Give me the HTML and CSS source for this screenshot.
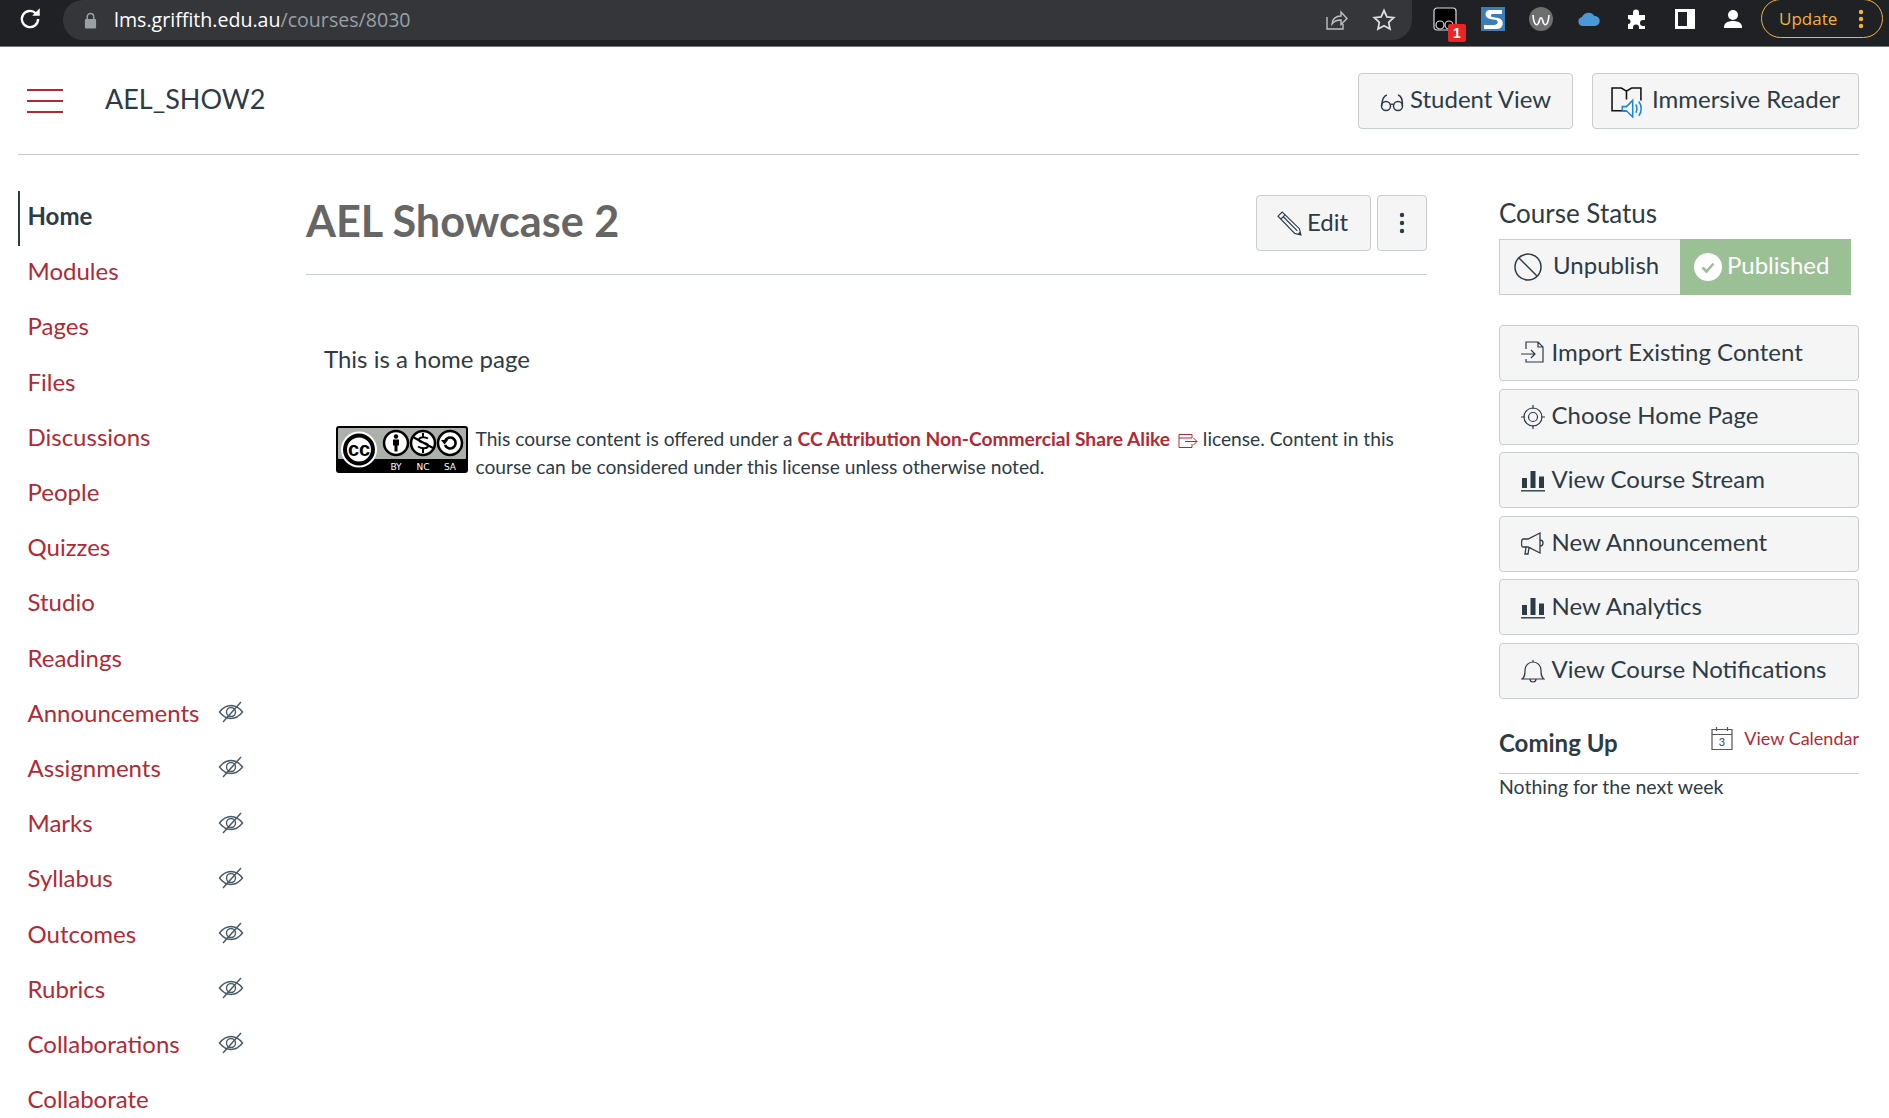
FILE: index.html
```html
<!DOCTYPE html>
<html lang="en">

<head>
  <meta charset="UTF-8">
  <title>AEL Showcase 2</title>
  <link rel="stylesheet" href="styles.css">
</head>

<body>
  <svg class="sprites" width="0" height="0">
    <symbol id="eye-off" viewBox="0 0 26 24">
      <path d="M1.5 12C5 7.5 9 5.5 13 5.5S21 7.500 24.500 12C21 16.500 17 18.500 13 18.500S5 16.500 1.500 12Z" fill="none" stroke="currentColor" stroke-width="1.400"/>
      <circle cx="13" cy="12" r="4.500" fill="none" stroke="currentColor" stroke-width="1.400"/>
      <path d="M5 22 23 2" stroke="currentColor" stroke-width="1.500"/>
    </symbol>
    <symbol id="bars" viewBox="0 0 24 24">
      <path d="M1 10h5v10H1zM9.500 3h5v17h-5zM18 8.500h5V20h-5z" fill="currentColor"/>
      <path d="M0 22.800h24" stroke="currentColor" stroke-width="1.400"/>
    </symbol>
  </svg>

  <div class="toolbar">
    <svg class="reload" viewBox="0 0 24 24"><path d="M19.500 12a7.500 7.500 0 1 1-2.200-5.300" fill="none" stroke="#fff" stroke-width="2.200"/><path d="M14 9h7V2z" fill="#fff"/></svg>
    <div class="omnibox">
      <svg class="lock" viewBox="0 0 14 18"><path d="M3.500 8V5a3.500 3.500 0 0 1 7 0v3" fill="none" stroke="#9aa0a6" stroke-width="1.600"/><rect x="1" y="7.500" width="12" height="10" rx="1" fill="#9aa0a6"/></svg>
      <span class="url"><span class="host">lms.griffith.edu.au</span>/courses/8030</span>
      <svg class="omni-icon share" viewBox="0 0 24 24"><path d="M3 9v12h16v-5M8 16c0-5 4-8 9-8V4l6 6.500-6 6V12c-4 0-7 1-9 4Z" fill="none" stroke="#bdc1c6" stroke-width="1.400"/></svg>
      <svg class="omni-icon" viewBox="0 0 24 24"><path d="M12 2.500l2.900 6.300 6.800.8-5 4.700 1.300 6.800-6-3.400-6 3.400 1.300-6.800-5-4.700 6.800-.8Z" fill="none" stroke="#dadce0" stroke-width="1.800"/></svg>
    </div>
    <div class="extensions">
      <div class="ext">
        <svg viewBox="0 0 24 24"><rect x="1" y="1" width="22" height="22" rx="3" fill="#000" stroke="#dadce0" stroke-width="1.200"/><circle cx="7" cy="18" r="4" fill="none" stroke="#dadce0" stroke-width="1.200"/><circle cx="16" cy="18" r="4" fill="none" stroke="#dadce0" stroke-width="1.200"/></svg>
        <span class="ext-badge">1</span>
      </div>
      <svg class="ext" viewBox="0 0 24 24"><rect width="24" height="24" fill="#3d7db5"/><path d="M21 3H9C3 3 3 11 9 12l6 1c3 1 2 5-2 5H3v4h13c7 0 8-10 1-11l-6-1c-2-1-1-3 1-3h9Z" fill="#fff"/></svg>
      <svg class="ext" viewBox="0 0 24 24"><circle cx="12" cy="12" r="12" fill="#6e6e6e"/><path d="M4 8c1 12 5 12 6.500 5 .5-3 2.500-3 3 0C15 20 19 20 20 8" fill="none" stroke="#fff" stroke-width="1.600"/></svg>
      <svg class="ext" viewBox="0 0 24 24"><path d="M6 19a4.500 4.500 0 0 1-1-8.900A7 7 0 0 1 17.500 9 5 5 0 0 1 18 19Z" fill="#4a98d6"/></svg>
      <svg class="ext" viewBox="0 0 24 24"><path d="M3 8h5V5.500a3 3 0 0 1 6 0V8h6v5h-2a3 3 0 0 0 0 6h2v3h-6v-1.500a3 3 0 0 0-6 0V22H3v-5a2.500 2.500 0 0 0 0-5Z" fill="#fff"/></svg>
      <svg class="ext" viewBox="0 0 24 24"><path d="M2 2h20v20H2zM5 5v14h9V5z" fill="#fff" fill-rule="evenodd"/></svg>
      <svg class="ext" viewBox="0 0 24 24"><circle cx="12" cy="8" r="5" fill="#fff"/><path d="M3 20c0-4 4-6 9-6s9 2 9 6v1H3Z" fill="#fff"/></svg>
    </div>
    <div class="update">Update
      <svg class="update-dots" viewBox="0 0 6 20"><circle cx="3" cy="3" r="2.200"/><circle cx="3" cy="10" r="2.200"/><circle cx="3" cy="17" r="2.200"/></svg>
    </div>
  </div>

  <header class="course-header">
    <div class="hamburger"><span></span><span></span><span></span></div>
    <div class="crumb">AEL_SHOW2</div>
    <div class="header-actions">
      <a class="btn student-view">
        <svg class="icon-sm" viewBox="0 0 24 24"><circle cx="6" cy="17" r="4.500" fill="none" stroke="currentColor" stroke-width="1.500"/><circle cx="18" cy="17" r="4.500" fill="none" stroke="currentColor" stroke-width="1.500"/><path d="M10 16c1-1 3-1 4 0M1.600 17C2 11 3 7 7 6M22.400 17C22.500 11 22 7 18 6" fill="none" stroke="currentColor" stroke-width="1.500"/></svg>
        Student View
      </a>
      <a class="btn reader">
        <svg class="icon-reader" viewBox="0 0 32 32"><path d="M15 24H1V2h9l5 3 5-3h9v12M15 5v8" fill="none" stroke="#111" stroke-width="1.500"/><path d="M11 20h4l6-6v16l-6-6h-4Z" fill="#fff" stroke="#1a86d8" stroke-width="1.500"/><path d="M24 18c1.500 2 1.500 6 0 8M27 15c3 4 3 10 0 14" fill="none" stroke="#1a86d8" stroke-width="1.500"/></svg>
        Immersive Reader
      </a>
    </div>
  </header>

  <div class="layout">
    <nav class="course-nav">
      <a class="nav-item active">Home</a>
      <a class="nav-item">Modules</a>
      <a class="nav-item">Pages</a>
      <a class="nav-item">Files</a>
      <a class="nav-item">Discussions</a>
      <a class="nav-item">People</a>
      <a class="nav-item">Quizzes</a>
      <a class="nav-item">Studio</a>
      <a class="nav-item">Readings</a>
      <a class="nav-item">Announcements<svg class="eye"><use href="#eye-off"/></svg></a>
      <a class="nav-item">Assignments<svg class="eye"><use href="#eye-off"/></svg></a>
      <a class="nav-item">Marks<svg class="eye"><use href="#eye-off"/></svg></a>
      <a class="nav-item">Syllabus<svg class="eye"><use href="#eye-off"/></svg></a>
      <a class="nav-item">Outcomes<svg class="eye"><use href="#eye-off"/></svg></a>
      <a class="nav-item">Rubrics<svg class="eye"><use href="#eye-off"/></svg></a>
      <a class="nav-item">Collaborations<svg class="eye"><use href="#eye-off"/></svg></a>
      <a class="nav-item">Collaborate</a>
    </nav>

    <main class="content">
      <div class="page-title">
        <h1>AEL Showcase 2</h1>
        <a class="btn edit">
          <svg class="icon-edit" viewBox="0 0 24 24"><path d="M1 5 5 1 21.500 17 23 23l-6-1.500ZM3.500 8 8 3.500M6 5.500l13.500 13.500" fill="none" stroke="currentColor" stroke-width="1.100"/><path d="M20 21.800 23 23l-1-3.200Z" fill="currentColor"/></svg>
          Edit
        </a>
        <a class="btn kebab">
          <svg viewBox="0 0 6 22" width="6" height="22"><circle cx="3" cy="3" r="2.200"/><circle cx="3" cy="11" r="2.200"/><circle cx="3" cy="19" r="2.200"/></svg>
        </a>
      </div>

      <p class="home-text">This is a home page</p>

      <div class="license">
        <svg class="cc-badge" viewBox="0 0 132 47">
          <rect width="132" height="47" rx="3" fill="#000"/>
          <rect x="2" y="2" width="128" height="31" rx="1" fill="#abb1aa"/>
          <circle cx="23" cy="23.500" r="18" fill="#fff"/>
          <circle cx="23" cy="23.500" r="14" fill="#fff" stroke="#000" stroke-width="4"/>
          <text x="23" y="29.500" class="cc-mark">cc</text>
          <circle cx="60" cy="17" r="12" fill="#fff" stroke="#000" stroke-width="2.500"/>
          <circle cx="60" cy="10.500" r="2.200"/>
          <path d="M57 13.500h6v6h-1.500v6h-3v-6H57Z"/>
          <circle cx="87" cy="17" r="12" fill="#fff" stroke="#000" stroke-width="2.500"/>
          <path d="M92 12.500c-3-2-9-2-9 1.500s9 2 9 5.500-6 3.500-10 1M87 7v4M87 23v4M77 11l20 11" fill="none" stroke="#000" stroke-width="2"/>
          <circle cx="114" cy="17" r="12" fill="#fff" stroke="#000" stroke-width="2.500"/>
          <path d="M109 15a5.500 5.500 0 1 1 0 4" fill="none" stroke="#000" stroke-width="2.600"/>
          <path d="M105 14h7l-3.500 4.500Z"/>
          <text x="60" y="43.500" class="cc-terms">BY</text>
          <text x="87" y="43.500" class="cc-terms">NC</text>
          <text x="114" y="43.500" class="cc-terms">SA</text>
        </svg>
        <p>This course content is offered under a <a class="license-link">CC Attribution Non-Commercial Share Alike</a>
          <svg class="external" viewBox="0 0 20 16"><path d="M14 5V1.500H1v13h13V11M1 5h13" fill="none" stroke="#b02a35" stroke-width="1"/><path d="M7 8.500h12M15.500 5l3.500 3.500-3.500 3.500" fill="none" stroke="#b02a35" stroke-width="1"/></svg>
          license. Content in this course can be considered under this license unless otherwise noted.</p>
      </div>
    </main>

    <aside class="sidebar">
      <h2 class="status-title">Course Status</h2>
      <div class="status-group">
        <a class="status-btn unpublish">
          <svg class="status-icon" viewBox="0 0 28 28"><circle cx="14" cy="14" r="13" fill="none" stroke="currentColor" stroke-width="1.500"/><path d="M5 5l18 18" stroke="currentColor" stroke-width="1.500"/></svg>
          Unpublish
        </a>
        <a class="status-btn published">
          <svg class="status-icon" viewBox="0 0 28 28"><circle cx="14" cy="14" r="14" fill="#fff"/><path d="M8.500 14.500l4 4 7-8" fill="none" stroke="#9bc096" stroke-width="2.600"/></svg>
          Published
        </a>
      </div>

      <div class="course-actions">
        <a class="btn action">
          <svg class="action-icon" viewBox="0 0 24 24"><path d="M5 8V1h12l5 5v15H5v-3M17 1v5h5M0 13h14M10 9l4 4-4 4" fill="none" stroke="currentColor" stroke-width="1.200"/></svg>
          <span>Import Existing Content</span>
        </a>
        <a class="btn action">
          <svg class="action-icon" viewBox="0 0 24 24"><circle cx="12" cy="12" r="9" fill="none" stroke="currentColor" stroke-width="1.200"/><circle cx="12" cy="12" r="4.500" fill="none" stroke="currentColor" stroke-width="1.200"/><path d="M12 0v4M12 20v4M0 12h4M20 12h4" stroke="currentColor" stroke-width="1.200"/></svg>
          <span>Choose Home Page</span>
        </a>
        <a class="btn action">
          <svg class="action-icon"><use href="#bars"/></svg>
          <span>View Course Stream</span>
        </a>
        <a class="btn action">
          <svg class="action-icon" viewBox="0 0 24 24"><path d="M19 1 7 7H2C0 7 0 15 2 15h5l12 6ZM19 8c4 0 4 6 0 6M5 15l-1 7h3l1-6h2" fill="none" stroke="currentColor" stroke-width="1.300"/></svg>
          <span>New Announcement</span>
        </a>
        <a class="btn action">
          <svg class="action-icon"><use href="#bars"/></svg>
          <span>New Analytics</span>
        </a>
        <a class="btn action">
          <svg class="action-icon" viewBox="0 0 24 24"><path d="M1 20c3-2 3-5 3-9a8 8 0 0 1 16 0c0 4 0 7 3 9ZM12 3V1M9 20c0 4 6 4 6 0" fill="none" stroke="currentColor" stroke-width="1.200"/></svg>
          <span>View Course Notifications</span>
        </a>
      </div>

      <div class="coming-up">
        <h2>Coming Up</h2>
        <a class="calendar-link">
          <svg class="calendar" viewBox="0 0 22 24"><path d="M1 3.500h20v20H1zM1 8.500h20M5.500 1v4M16.500 1v4" fill="none" stroke="#555" stroke-width="1.200"/><text x="11" y="20" class="calendar-day">3</text></svg>
          View Calendar
        </a>
      </div>
      <p class="nothing">Nothing for the next week</p>
    </aside>
  </div>
</body>

</html>
```

FILE: styles.css
```css
:root {
  --griffith-red: #b02a35;
  --ink: #2d3b45;
  --line: #c7cdd1;
  --button: #f5f5f5;
}

* {
  box-sizing: border-box;
}

html,
body {
  height: 100%;
}

body {
  margin: 0;
  overflow: hidden;
  background-color: #fff;
  color: var(--ink);
  font-family: Lato, sans-serif;
  font-size: 24px;
}

.sprites {
  position: absolute;
}

/* browser chrome */
.toolbar {
  display: flex;
  align-items: flex-start;
  height: 47px;
  padding-right: 6px;
  background-color: #202124;
  border-bottom: 1px solid #777;
}

.reload {
  flex: none;
  width: 26px;
  height: 26px;
  margin: 6px 20px 0 17px;
}

.omnibox {
  display: flex;
  flex: 1;
  align-items: center;
  height: 40px;
  padding: 0 16px 0 21px;
  background-color: #35363a;
  border-radius: 0 0 20px 20px;
  border-top-left-radius: 20px;
}

.lock {
  width: 13px;
  height: 17px;
  margin-right: 17px;
}

.url {
  flex: 1;
  margin-top: -2px;
  color: #9aa0a6;
  font-family: "Open Sans", sans-serif;
  font-size: 19.600px;
}

.host {
  color: #fff;
}

.omni-icon {
  width: 24px;
  height: 24px;
}

.share {
  margin-right: 24px;
}

.extensions {
  display: flex;
  gap: 24px;
  margin: 7px 16px 0 21px;
}

.ext {
  position: relative;
  width: 24px;
  height: 24px;
}

.ext svg {
  display: block;
  width: 24px;
  height: 24px;
}

.ext-badge {
  position: absolute;
  right: -9px;
  bottom: -11px;
  width: 18px;
  height: 18px;
  background-color: #e8262a;
  border-radius: 2px;
  color: #fff;
  font-family: "Liberation Sans", sans-serif;
  font-size: 14px;
  font-weight: bold;
  line-height: 18px;
  text-align: center;
}

.update {
  display: flex;
  align-items: center;
  justify-content: space-between;
  width: 122px;
  height: 39px;
  margin-top: -1px;
  padding: 0 18px 0 17px;
  border: 1px solid #f2b33d;
  border-radius: 20px;
  color: #f2b33d;
  font-family: "Open Sans", sans-serif;
  font-size: 17px;
}

.update-dots {
  width: 6px;
  height: 20px;
  fill: #f2b33d;
}

/* course header */
.course-header {
  display: flex;
  align-items: center;
  height: 108px;
  margin: 0 30px 0 18px;
  border-bottom: 1px solid #c8c8c8;
}

.hamburger {
  display: flex;
  flex-direction: column;
  justify-content: space-between;
  width: 36px;
  height: 24px;
  margin: 0 42px 0 9px;
}

.hamburger span {
  height: 2px;
  background-color: var(--griffith-red);
}

.crumb {
  font-size: 27px;
  margin-top: -5px;
}

.header-actions {
  display: flex;
  gap: 19px;
  margin-left: auto;
}

.btn {
  display: flex;
  align-items: center;
  height: 56px;
  padding-bottom: 4px;
  background-color: var(--button);
  border: 1px solid var(--line);
  border-radius: 4px;
  color: var(--ink);
}

.btn svg {
  margin-top: 4px;
}

.student-view {
  gap: 6px;
  width: 215px;
  padding-left: 21px;
}

.reader {
  gap: 8px;
  width: 267px;
  padding-bottom: 5px;
  padding-left: 18px;
}

.icon-sm {
  width: 24px;
  height: 24px;
  flex: none;
}

.icon-edit {
  width: 25px;
  height: 25px;
  flex: none;
}

.btn .icon-reader {
  width: 33px;
  height: 33px;
  flex: none;
  margin-top: 9px;
}

/* three columns */
.layout {
  display: grid;
  grid-template-columns: 288px 1121px 432px;
  margin-left: 18px;
}

.course-nav {
  padding-top: 36px;
}

.nav-item {
  display: flex;
  align-items: center;
  justify-content: space-between;
  width: 226px;
  height: 55.200px;
  padding-bottom: 6px;
  padding-left: 9.500px;
  color: var(--griffith-red);
  white-space: nowrap;
}

.nav-item.active {
  border-left: 2px solid var(--ink);
  padding-left: 7.500px;
  color: var(--ink);
  font-weight: bold;
}

.eye {
  flex: none;
  width: 26px;
  height: 24px;
  color: #4a5a66;
}

.content {
  padding-top: 40px;
}

.page-title {
  display: flex;
  gap: 6px;
  align-items: flex-start;
  padding-bottom: 23px;
  border-bottom: 1px solid var(--line);
}

.page-title h1 {
  flex: 1;
  margin: 0;
  color: #666;
  font-size: 43.200px;
  line-height: 50px;
}

.edit {
  gap: 5px;
  width: 115px;
  padding-left: 20px;
}

.kebab {
  justify-content: center;
  width: 50px;
  padding: 0;
  fill: var(--ink);
}

.kebab svg {
  margin: 0;
}

.home-text {
  margin: 66px 0 0 18px;
  line-height: 36px;
}

.license {
  display: flex;
  gap: 7.500px;
  margin: 49px 0 0 30px;
  font-size: 19.200px;
  line-height: 28px;
}

.license p {
  margin: -1px 0 0;
}

.cc-badge {
  flex: none;
  width: 132px;
  height: 47px;
}

.cc-mark {
  font-family: "Liberation Sans", sans-serif;
  font-size: 20px;
  font-weight: bold;
  text-anchor: middle;
}

.cc-terms {
  fill: #fff;
  font-family: "DejaVu Sans", sans-serif;
  font-size: 9px;
  text-anchor: middle;
}

.license-link {
  color: var(--griffith-red);
  font-weight: bold;
}

.external {
  width: 20px;
  height: 16px;
  margin: 0 0 0 3px;
  vertical-align: -3px;
}

/* right column */
.sidebar {
  padding: 34px 0 0 72px;
}

.status-title {
  margin: 0;
  font-size: 26px;
  font-weight: normal;
  line-height: 48px;
}

.status-group {
  display: flex;
  width: 352px;
  height: 56px;
  margin-top: 2px;
}

.status-btn {
  display: flex;
  align-items: center;
  height: 56px;
  padding-bottom: 6px;
}

.status-icon {
  flex: none;
  width: 28px;
  height: 28px;
  margin-top: 6px;
}

.unpublish {
  gap: 11px;
  width: 181px;
  padding-left: 14px;
  background-color: var(--button);
  border: 1px solid var(--line);
  border-right: none;
}

.published {
  gap: 5px;
  width: 171px;
  padding-left: 14px;
  background-color: #9bc096;
  color: #fff;
}

.course-actions {
  display: flex;
  flex-direction: column;
  gap: 7.500px;
  margin-top: 30px;
}

.action {
  gap: 6.500px;
  padding-left: 21px;
}

.action-icon {
  flex: none;
  width: 24px;
  height: 24px;
}

.coming-up {
  display: flex;
  align-items: flex-start;
  justify-content: space-between;
  margin-top: 26px;
  padding-bottom: 12px;
  border-bottom: 1px solid var(--line);
}

.coming-up h2 {
  margin: 0;
  font-size: 24px;
  line-height: 36px;
}

.calendar-link {
  display: flex;
  gap: 11px;
  align-items: center;
  margin-top: 1px;
  color: var(--griffith-red);
  font-size: 18px;
}

.calendar {
  width: 22px;
  height: 24px;
}

.calendar-day {
  fill: #444;
  font-family: Lato, sans-serif;
  font-size: 11px;
  text-anchor: middle;
}

.nothing {
  margin: 0;
  font-size: 19.500px;
  line-height: 26px;
}
```
